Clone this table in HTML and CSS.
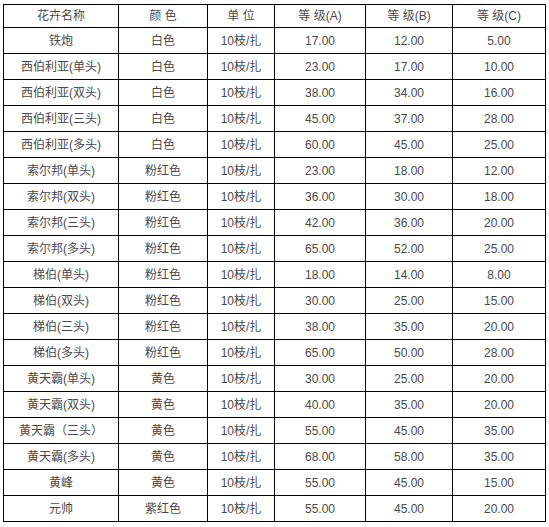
FILE: index.html
```html
<!DOCTYPE html>
<html lang="zh">
<head>
<meta charset="utf-8">
<title>花卉价格表</title>
<link rel="stylesheet" href="styles.css">
</head>
<body>
<table class="price">
<colgroup>
<col class="c-name"><col class="c-color"><col class="c-unit"><col class="c-a"><col class="c-b"><col class="c-c">
</colgroup>
<thead>
<tr class="head"><td>花卉名称</td><td>颜&nbsp;色</td><td>单&nbsp;位</td><td>等&nbsp;级(A)</td><td>等&nbsp;级(B)</td><td>等&nbsp;级(C)</td></tr>
</thead>
<tbody>
<tr><td>铁炮</td><td>白色</td><td>10枝/扎</td><td>17.00</td><td>12.00</td><td>5.00</td></tr>
<tr><td>西伯利亚(单头)</td><td>白色</td><td>10枝/扎</td><td>23.00</td><td>17.00</td><td>10.00</td></tr>
<tr><td>西伯利亚(双头)</td><td>白色</td><td>10枝/扎</td><td>38.00</td><td>34.00</td><td>16.00</td></tr>
<tr><td>西伯利亚(三头)</td><td>白色</td><td>10枝/扎</td><td>45.00</td><td>37.00</td><td>28.00</td></tr>
<tr><td>西伯利亚(多头)</td><td>白色</td><td>10枝/扎</td><td>60.00</td><td>45.00</td><td>25.00</td></tr>
<tr><td>索尔邦(单头)</td><td>粉红色</td><td>10枝/扎</td><td>23.00</td><td>18.00</td><td>12.00</td></tr>
<tr><td>索尔邦(双头)</td><td>粉红色</td><td>10枝/扎</td><td>36.00</td><td>30.00</td><td>18.00</td></tr>
<tr><td>索尔邦(三头)</td><td>粉红色</td><td>10枝/扎</td><td>42.00</td><td>36.00</td><td>20.00</td></tr>
<tr><td>索尔邦(多头)</td><td>粉红色</td><td>10枝/扎</td><td>65.00</td><td>52.00</td><td>25.00</td></tr>
<tr><td>梯伯(单头)</td><td>粉红色</td><td>10枝/扎</td><td>18.00</td><td>14.00</td><td>8.00</td></tr>
<tr><td>梯伯(双头)</td><td>粉红色</td><td>10枝/扎</td><td>30.00</td><td>25.00</td><td>15.00</td></tr>
<tr><td>梯伯(三头)</td><td>粉红色</td><td>10枝/扎</td><td>38.00</td><td>35.00</td><td>20.00</td></tr>
<tr><td>梯伯(多头)</td><td>粉红色</td><td>10枝/扎</td><td>65.00</td><td>50.00</td><td>28.00</td></tr>
<tr><td>黄天霸(单头)</td><td>黄色</td><td>10枝/扎</td><td>30.00</td><td>25.00</td><td>20.00</td></tr>
<tr><td>黄天霸(双头)</td><td>黄色</td><td>10枝/扎</td><td>40.00</td><td>35.00</td><td>20.00</td></tr>
<tr><td>黄天霸（三头）</td><td>黄色</td><td>10枝/扎</td><td>55.00</td><td>45.00</td><td>35.00</td></tr>
<tr><td>黄天霸(多头)</td><td>黄色</td><td>10枝/扎</td><td>68.00</td><td>58.00</td><td>35.00</td></tr>
<tr><td>黄峰</td><td>黄色</td><td>10枝/扎</td><td>55.00</td><td>45.00</td><td>15.00</td></tr>
<tr><td>元帅</td><td>紫红色</td><td>10枝/扎</td><td>55.00</td><td>45.00</td><td>20.00</td></tr>
</tbody>
</table>
</body>
</html>
```
FILE: styles.css
```css
html, body {
  margin: 0;
  padding: 0;
  background: #fff;
}
body {
  padding: 4px 0 0 3px;
}
.price {
  border-collapse: collapse;
  table-layout: fixed;
  width: 542px;
  font-family: "Liberation Sans", "Noto Sans CJK SC", sans-serif;
  font-size: 12px;
  color: #4a4a4a;
}
.c-name { width: 115px; }
.c-color { width: 89px; }
.c-unit { width: 67px; }
.c-a { width: 91px; }
.c-b { width: 87px; }
.c-c { width: 93px; }
.price td {
  border: 1px solid #000;
  text-align: center;
  vertical-align: middle;
  padding: 0;
  height: 25px;
  line-height: 14px;
  white-space: nowrap;
}
.price .head td {
  height: 22px;
}
```
